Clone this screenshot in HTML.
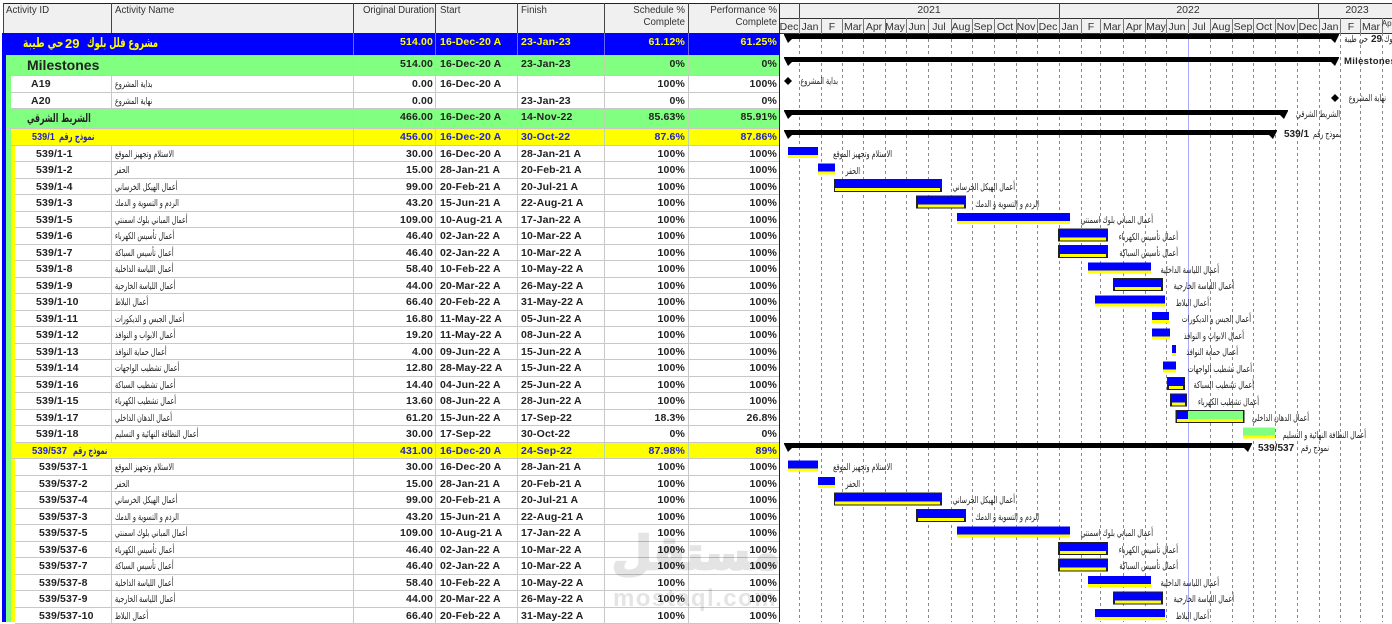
<!DOCTYPE html>
<html lang="ar"><head><meta charset="utf-8"><title>Schedule</title>
<style>
html,body{margin:0;padding:0;background:#fff}
body{width:1392px;height:622px;overflow:hidden;position:relative;font-family:"Liberation Sans",sans-serif;color:#222}
.h{position:absolute;top:3px;left:3px;width:776px;height:30px;background:#f0f0f0;border-top:1px solid #222;box-sizing:border-box}
.t{position:absolute;font-size:9.7px;line-height:12px;color:#333;white-space:nowrap;top:3px}
.v{position:absolute;top:3px;height:30px;width:1px;background:#444}
.r{position:absolute;left:15px;width:764px;height:16.5px;background:#fff;border-bottom:1px solid #c8c8c8;box-sizing:border-box;font-size:10.5px;line-height:15px;font-weight:bold;letter-spacing:.15px}
.r span{position:absolute;top:1px;white-space:nowrap}
.r i{position:absolute;top:0;bottom:0;width:1px;background:#c8c8c8}
.x1{left:96px}.x2{left:338px}.x3{left:420px}.x4{left:502px}.x5{left:589px}.x6{left:673px}
.r .n{left:100px;font:normal 9.5px/15px "DejaVu Sans",sans-serif;letter-spacing:0;direction:rtl;color:#222;transform:scaleX(.67);transform-origin:0 50%}
.r .ar{font-family:"DejaVu Sans",sans-serif;letter-spacing:0;direction:rtl;transform-origin:0 50%}
.d{right:346px}.s{left:425px}.f{left:506px}.p{right:94px}.q{right:2px}
.g{background:#80ff80}.y{background:#ff0;color:#2222cc}.b{background:#0000ff;color:#ff0;border-bottom:0}
.g i,.y i{background:#b8d8a8}.b i{background:#6666ff}
.bd{position:absolute;top:33px;bottom:0}
svg{position:absolute;left:0;top:0}
.m{font:10.5px "Liberation Sans",sans-serif;fill:#333;text-anchor:middle}
.l{font:9.5px "DejaVu Sans",sans-serif;fill:#222;direction:rtl;text-anchor:start;transform-box:fill-box;transform-origin:100% 50%;transform:scaleX(.67)}
.lb{font:bold 10px "Liberation Sans",sans-serif;fill:#222}
.wm{position:absolute;color:#e4e4e4;white-space:nowrap;mix-blend-mode:multiply}
</style></head><body>
<div class="h"></div>
<div class="t" style="left:6px;top:5px">Activity ID</div>
<div class="t" style="left:115px;top:5px">Activity Name</div>
<div class="t" style="left:363px;top:5px;letter-spacing:-.1px">Original Duration</div>
<div class="t" style="left:440px;top:5px">Start</div>
<div class="t" style="left:521px;top:5px">Finish</div>
<div class="t" style="right:707px;top:5px;text-align:right">Schedule %</div>
<div class="t" style="right:707px;top:17px;text-align:right">Complete</div>
<div class="t" style="right:615px;top:5px;text-align:right">Performance %</div>
<div class="t" style="right:615px;top:17px;text-align:right">Complete</div>
<div class="v" style="left:3px"></div><div class="v" style="left:111px"></div><div class="v" style="left:353px"></div><div class="v" style="left:435px"></div><div class="v" style="left:517px"></div><div class="v" style="left:604px"></div><div class="v" style="left:688px"></div>

<div class="bd" style="left:2px;width:4px;background:#0000ff"></div>
<div class="bd" style="left:6px;width:5px;background:#80ff80;top:55px"></div>
<div class="bd" style="left:11px;width:4px;background:#ff0;top:129px"></div>

<div class="r b" style="left:2px;width:777px;top:33px;height:22px;line-height:16px"><i style="left:109px;background:#0000ff"></i><i style="left:351px"></i><i style="left:433px"></i><i style="left:515px"></i><i style="left:602px"></i><i style="left:686px"></i>
<span class="ar" style="left:85px;top:2px;font-size:13px;line-height:18px;transform:scaleX(.64)">مشروع فلل بلوك</span>
<span style="left:63px;top:2px;font-size:13px;line-height:18px;letter-spacing:0">29</span>
<span class="ar" style="left:21px;top:2px;font-size:13px;line-height:18px;transform:scaleX(.7)">حي طيبة</span>
<span style="right:346px">514.00</span><span style="left:438px">16-Dec-20 A</span><span style="left:519px">23-Jan-23</span><span style="right:94px">61.12%</span><span style="right:2px">61.25%</span></div>

<div class="r g" style="left:6px;width:773px;top:55px;height:21px;line-height:16px"><i style="left:347px"></i><i style="left:429px"></i><i style="left:511px"></i><i style="left:598px"></i><i style="left:682px"></i>
<span style="left:21px;font-size:14px;letter-spacing:0;line-height:18px">Milestones</span>
<span style="right:346px">514.00</span><span style="left:434px">16-Dec-20 A</span><span style="left:515px">23-Jan-23</span><span style="right:94px">0%</span><span style="right:2px">0%</span></div>

<div class="r" style="left:11px;width:768px;top:76px;line-height:14px"><i style="left:100px"></i><i style="left:342px"></i><i style="left:424px"></i><i style="left:506px"></i><i style="left:593px"></i><i style="left:677px"></i>
<span style="left:20px">A19</span><span class="n" style="left:104px">بداية المشروع</span><span style="right:346px">0.00</span><span style="left:429px">16-Dec-20 A</span><span style="right:94px">100%</span><span style="right:2px">100%</span></div>
<div class="r" style="left:11px;width:768px;top:92.5px;line-height:14px"><i style="left:100px"></i><i style="left:342px"></i><i style="left:424px"></i><i style="left:506px"></i><i style="left:593px"></i><i style="left:677px"></i>
<span style="left:20px">A20</span><span class="n" style="left:104px">نهاية المشروع</span><span style="right:346px">0.00</span><span style="left:510px">23-Jan-23</span><span style="right:94px">0%</span><span style="right:2px">0%</span></div>

<div class="r g" style="left:6px;width:773px;top:109px;height:20px;line-height:14px"><i style="left:347px"></i><i style="left:429px"></i><i style="left:511px"></i><i style="left:598px"></i><i style="left:682px"></i>
<span class="ar" style="left:21px;font-size:12px;line-height:16px;transform:scaleX(.65)">الشريط الشرقي</span>
<span style="right:346px">466.00</span><span style="left:434px">16-Dec-20 A</span><span style="left:515px">14-Nov-22</span><span style="right:94px">85.63%</span><span style="right:2px">85.91%</span></div>

<div class="r y" style="left:11px;width:768px;top:129px"><i style="left:342px"></i><i style="left:424px"></i><i style="left:506px"></i><i style="left:593px"></i><i style="left:677px"></i>
<span style="left:21px;transform:scaleX(.85);transform-origin:0 50%">539/1</span>
<span class="ar" style="left:48px;font-size:10.5px;transform:scaleX(.64)">نموذج رقم</span>
<span style="right:346px">456.00</span><span style="left:429px">16-Dec-20 A</span><span style="left:510px">30-Oct-22</span><span style="right:94px">87.6%</span><span style="right:2px">87.86%</span></div>

<div class="r" style="top:145.5px"><i class="x1"></i><i class="x2"></i><i class="x3"></i><i class="x4"></i><i class="x5"></i><i class="x6"></i><span style="left:21px">539/1-1</span><span class="n">الاستلام وتجهيز الموقع</span><span class="d">30.00</span><span class="s">16-Dec-20 A</span><span class="f">28-Jan-21 A</span><span class="p">100%</span><span class="q">100%</span></div>
<div class="r" style="top:162px"><i class="x1"></i><i class="x2"></i><i class="x3"></i><i class="x4"></i><i class="x5"></i><i class="x6"></i><span style="left:21px">539/1-2</span><span class="n">الحفر</span><span class="d">15.00</span><span class="s">28-Jan-21 A</span><span class="f">20-Feb-21 A</span><span class="p">100%</span><span class="q">100%</span></div>
<div class="r" style="top:178.5px"><i class="x1"></i><i class="x2"></i><i class="x3"></i><i class="x4"></i><i class="x5"></i><i class="x6"></i><span style="left:21px">539/1-4</span><span class="n">أعمال الهيكل الخرساني</span><span class="d">99.00</span><span class="s">20-Feb-21 A</span><span class="f">20-Jul-21 A</span><span class="p">100%</span><span class="q">100%</span></div>
<div class="r" style="top:195px"><i class="x1"></i><i class="x2"></i><i class="x3"></i><i class="x4"></i><i class="x5"></i><i class="x6"></i><span style="left:21px">539/1-3</span><span class="n">الردم و التسوية و الدمك</span><span class="d">43.20</span><span class="s">15-Jun-21 A</span><span class="f">22-Aug-21 A</span><span class="p">100%</span><span class="q">100%</span></div>
<div class="r" style="top:211.5px"><i class="x1"></i><i class="x2"></i><i class="x3"></i><i class="x4"></i><i class="x5"></i><i class="x6"></i><span style="left:21px">539/1-5</span><span class="n">أعمال المباني بلوك اسمنتي</span><span class="d">109.00</span><span class="s">10-Aug-21 A</span><span class="f">17-Jan-22 A</span><span class="p">100%</span><span class="q">100%</span></div>
<div class="r" style="top:228px"><i class="x1"></i><i class="x2"></i><i class="x3"></i><i class="x4"></i><i class="x5"></i><i class="x6"></i><span style="left:21px">539/1-6</span><span class="n">أعمال تأسيس الكهرباء</span><span class="d">46.40</span><span class="s">02-Jan-22 A</span><span class="f">10-Mar-22 A</span><span class="p">100%</span><span class="q">100%</span></div>
<div class="r" style="top:244.5px"><i class="x1"></i><i class="x2"></i><i class="x3"></i><i class="x4"></i><i class="x5"></i><i class="x6"></i><span style="left:21px">539/1-7</span><span class="n">أعمال تأسيس السباكة</span><span class="d">46.40</span><span class="s">02-Jan-22 A</span><span class="f">10-Mar-22 A</span><span class="p">100%</span><span class="q">100%</span></div>
<div class="r" style="top:261px"><i class="x1"></i><i class="x2"></i><i class="x3"></i><i class="x4"></i><i class="x5"></i><i class="x6"></i><span style="left:21px">539/1-8</span><span class="n">أعمال اللياسة الداخلية</span><span class="d">58.40</span><span class="s">10-Feb-22 A</span><span class="f">10-May-22 A</span><span class="p">100%</span><span class="q">100%</span></div>
<div class="r" style="top:277.5px"><i class="x1"></i><i class="x2"></i><i class="x3"></i><i class="x4"></i><i class="x5"></i><i class="x6"></i><span style="left:21px">539/1-9</span><span class="n">أعمال اللياسة الخارجية</span><span class="d">44.00</span><span class="s">20-Mar-22 A</span><span class="f">26-May-22 A</span><span class="p">100%</span><span class="q">100%</span></div>
<div class="r" style="top:294px"><i class="x1"></i><i class="x2"></i><i class="x3"></i><i class="x4"></i><i class="x5"></i><i class="x6"></i><span style="left:21px">539/1-10</span><span class="n">أعمال البلاط</span><span class="d">66.40</span><span class="s">20-Feb-22 A</span><span class="f">31-May-22 A</span><span class="p">100%</span><span class="q">100%</span></div>
<div class="r" style="top:310.5px"><i class="x1"></i><i class="x2"></i><i class="x3"></i><i class="x4"></i><i class="x5"></i><i class="x6"></i><span style="left:21px">539/1-11</span><span class="n">أعمال الجبس و الديكورات</span><span class="d">16.80</span><span class="s">11-May-22 A</span><span class="f">05-Jun-22 A</span><span class="p">100%</span><span class="q">100%</span></div>
<div class="r" style="top:327px"><i class="x1"></i><i class="x2"></i><i class="x3"></i><i class="x4"></i><i class="x5"></i><i class="x6"></i><span style="left:21px">539/1-12</span><span class="n">أعمال الابواب و النوافذ</span><span class="d">19.20</span><span class="s">11-May-22 A</span><span class="f">08-Jun-22 A</span><span class="p">100%</span><span class="q">100%</span></div>
<div class="r" style="top:343.5px"><i class="x1"></i><i class="x2"></i><i class="x3"></i><i class="x4"></i><i class="x5"></i><i class="x6"></i><span style="left:21px">539/1-13</span><span class="n">أعمال حماية النوافذ</span><span class="d">4.00</span><span class="s">09-Jun-22 A</span><span class="f">15-Jun-22 A</span><span class="p">100%</span><span class="q">100%</span></div>
<div class="r" style="top:360px"><i class="x1"></i><i class="x2"></i><i class="x3"></i><i class="x4"></i><i class="x5"></i><i class="x6"></i><span style="left:21px">539/1-14</span><span class="n">أعمال تشطيب الواجهات</span><span class="d">12.80</span><span class="s">28-May-22 A</span><span class="f">15-Jun-22 A</span><span class="p">100%</span><span class="q">100%</span></div>
<div class="r" style="top:376.5px"><i class="x1"></i><i class="x2"></i><i class="x3"></i><i class="x4"></i><i class="x5"></i><i class="x6"></i><span style="left:21px">539/1-16</span><span class="n">أعمال تشطيب السباكة</span><span class="d">14.40</span><span class="s">04-Jun-22 A</span><span class="f">25-Jun-22 A</span><span class="p">100%</span><span class="q">100%</span></div>
<div class="r" style="top:393px"><i class="x1"></i><i class="x2"></i><i class="x3"></i><i class="x4"></i><i class="x5"></i><i class="x6"></i><span style="left:21px">539/1-15</span><span class="n">أعمال تشطيب الكهرباء</span><span class="d">13.60</span><span class="s">08-Jun-22 A</span><span class="f">28-Jun-22 A</span><span class="p">100%</span><span class="q">100%</span></div>
<div class="r" style="top:409.5px"><i class="x1"></i><i class="x2"></i><i class="x3"></i><i class="x4"></i><i class="x5"></i><i class="x6"></i><span style="left:21px">539/1-17</span><span class="n">أعمال الدهان الداخلي</span><span class="d">61.20</span><span class="s">15-Jun-22 A</span><span class="f">17-Sep-22</span><span class="p">18.3%</span><span class="q">26.8%</span></div>
<div class="r" style="top:426px"><i class="x1"></i><i class="x2"></i><i class="x3"></i><i class="x4"></i><i class="x5"></i><i class="x6"></i><span style="left:21px">539/1-18</span><span class="n">أعمال النظافة النهائية و التسليم</span><span class="d">30.00</span><span class="s">17-Sep-22</span><span class="f">30-Oct-22</span><span class="p">0%</span><span class="q">0%</span></div>

<div class="r y" style="left:11px;width:768px;top:442.5px"><i style="left:342px"></i><i style="left:424px"></i><i style="left:506px"></i><i style="left:593px"></i><i style="left:677px"></i>
<span style="left:21px;transform:scaleX(.9);transform-origin:0 50%">539/537</span>
<span class="ar" style="left:62px;font-size:10.5px;transform:scaleX(.62)">نموذج رقم</span>
<span style="right:346px">431.00</span><span style="left:429px">16-Dec-20 A</span><span style="left:510px">24-Sep-22</span><span style="right:94px">87.98%</span><span style="right:2px">89%</span></div>

<div class="r" style="top:459px"><i class="x1"></i><i class="x2"></i><i class="x3"></i><i class="x4"></i><i class="x5"></i><i class="x6"></i><span style="left:24px">539/537-1</span><span class="n">الاستلام وتجهيز الموقع</span><span class="d">30.00</span><span class="s">16-Dec-20 A</span><span class="f">28-Jan-21 A</span><span class="p">100%</span><span class="q">100%</span></div>
<div class="r" style="top:475.5px"><i class="x1"></i><i class="x2"></i><i class="x3"></i><i class="x4"></i><i class="x5"></i><i class="x6"></i><span style="left:24px">539/537-2</span><span class="n">الحفر</span><span class="d">15.00</span><span class="s">28-Jan-21 A</span><span class="f">20-Feb-21 A</span><span class="p">100%</span><span class="q">100%</span></div>
<div class="r" style="top:492px"><i class="x1"></i><i class="x2"></i><i class="x3"></i><i class="x4"></i><i class="x5"></i><i class="x6"></i><span style="left:24px">539/537-4</span><span class="n">أعمال الهيكل الخرساني</span><span class="d">99.00</span><span class="s">20-Feb-21 A</span><span class="f">20-Jul-21 A</span><span class="p">100%</span><span class="q">100%</span></div>
<div class="r" style="top:508.5px"><i class="x1"></i><i class="x2"></i><i class="x3"></i><i class="x4"></i><i class="x5"></i><i class="x6"></i><span style="left:24px">539/537-3</span><span class="n">الردم و التسوية و الدمك</span><span class="d">43.20</span><span class="s">15-Jun-21 A</span><span class="f">22-Aug-21 A</span><span class="p">100%</span><span class="q">100%</span></div>
<div class="r" style="top:525px"><i class="x1"></i><i class="x2"></i><i class="x3"></i><i class="x4"></i><i class="x5"></i><i class="x6"></i><span style="left:24px">539/537-5</span><span class="n">أعمال المباني بلوك اسمنتي</span><span class="d">109.00</span><span class="s">10-Aug-21 A</span><span class="f">17-Jan-22 A</span><span class="p">100%</span><span class="q">100%</span></div>
<div class="r" style="top:541.5px"><i class="x1"></i><i class="x2"></i><i class="x3"></i><i class="x4"></i><i class="x5"></i><i class="x6"></i><span style="left:24px">539/537-6</span><span class="n">أعمال تأسيس الكهرباء</span><span class="d">46.40</span><span class="s">02-Jan-22 A</span><span class="f">10-Mar-22 A</span><span class="p">100%</span><span class="q">100%</span></div>
<div class="r" style="top:558px"><i class="x1"></i><i class="x2"></i><i class="x3"></i><i class="x4"></i><i class="x5"></i><i class="x6"></i><span style="left:24px">539/537-7</span><span class="n">أعمال تأسيس السباكة</span><span class="d">46.40</span><span class="s">02-Jan-22 A</span><span class="f">10-Mar-22 A</span><span class="p">100%</span><span class="q">100%</span></div>
<div class="r" style="top:574.5px"><i class="x1"></i><i class="x2"></i><i class="x3"></i><i class="x4"></i><i class="x5"></i><i class="x6"></i><span style="left:24px">539/537-8</span><span class="n">أعمال اللياسة الداخلية</span><span class="d">58.40</span><span class="s">10-Feb-22 A</span><span class="f">10-May-22 A</span><span class="p">100%</span><span class="q">100%</span></div>
<div class="r" style="top:591px"><i class="x1"></i><i class="x2"></i><i class="x3"></i><i class="x4"></i><i class="x5"></i><i class="x6"></i><span style="left:24px">539/537-9</span><span class="n">أعمال اللياسة الخارجية</span><span class="d">44.00</span><span class="s">20-Mar-22 A</span><span class="f">26-May-22 A</span><span class="p">100%</span><span class="q">100%</span></div>
<div class="r" style="top:607.5px"><i class="x1"></i><i class="x2"></i><i class="x3"></i><i class="x4"></i><i class="x5"></i><i class="x6"></i><span style="left:24px">539/537-10</span><span class="n">أعمال البلاط</span><span class="d">66.40</span><span class="s">20-Feb-22 A</span><span class="f">31-May-22 A</span><span class="p">100%</span><span class="q">100%</span></div>

<svg width="1392" height="622" viewBox="0 0 1392 622">
<rect x="779" y="3" width="613" height="30" fill="#f0f0f0"/>
<path d="M779 3.5H1392M779 18.5H1392M779 33.5H1392" stroke="#333" fill="none"/>
<path d="M799.5 3V18M1059.5 3V18M1318.5 3V18" stroke="#444" fill="none"/>
<path d="M799.5 18V33M821.5 18V33M842.5 18V33M863.5 18V33M885.5 18V33M906.5 18V33M928.5 18V33M951.5 18V33M972.5 18V33M994.5 18V33M1016.5 18V33M1037.5 18V33M1059.5 18V33M1081.5 18V33M1100.5 18V33M1123.5 18V33M1145.5 18V33M1166.5 18V33M1188.5 18V33M1210.5 18V33M1232.5 18V33M1253.5 18V33M1275.5 18V33M1297.5 18V33M1319.5 18V33M1340.5 18V33M1360.5 18V33M1382.5 18V33" stroke="#777" fill="none"/>
<path d="M799.5 33V622M821.5 33V622M842.5 33V622M863.5 33V622M885.5 33V622M906.5 33V622M928.5 33V622M951.5 33V622M972.5 33V622M994.5 33V622M1016.5 33V622M1037.5 33V622M1059.5 33V622M1081.5 33V622M1100.5 33V622M1123.5 33V622M1145.5 33V622M1166.5 33V622M1210.5 33V622M1232.5 33V622M1253.5 33V622M1275.5 33V622M1297.5 33V622M1319.5 33V622M1340.5 33V622M1360.5 33V622M1382.5 33V622" stroke="#888" stroke-dasharray="3 3" fill="none"/>
<path d="M1188.5 33V622" stroke="#a8a8ff" fill="none"/>
<path d="M779.5 3V622" stroke="#222" fill="none"/>
<text class="m" x="929" y="13">2021</text><text class="m" x="1188" y="13">2022</text><text class="m" x="1357" y="13">2023</text>
<text class="m" x="789" y="30">Dec</text><text class="m" x="810" y="30">Jan</text><text class="m" x="832" y="30">F</text><text class="m" x="853" y="30">Mar</text><text class="m" x="874" y="30">Apr</text><text class="m" x="895" y="30">May</text><text class="m" x="917" y="30">Jun</text><text class="m" x="939" y="30">Jul</text><text class="m" x="961" y="30">Aug</text><text class="m" x="983" y="30">Sep</text><text class="m" x="1005" y="30">Oct</text><text class="m" x="1026" y="30">Nov</text><text class="m" x="1048" y="30">Dec</text><text class="m" x="1070" y="30">Jan</text><text class="m" x="1091" y="30">F</text><text class="m" x="1112" y="30">Mar</text><text class="m" x="1134" y="30">Apr</text><text class="m" x="1156" y="30">May</text><text class="m" x="1177" y="30">Jun</text><text class="m" x="1199" y="30">Jul</text><text class="m" x="1221" y="30">Aug</text><text class="m" x="1243" y="30">Sep</text><text class="m" x="1264" y="30">Oct</text><text class="m" x="1286" y="30">Nov</text><text class="m" x="1308" y="30">Dec</text><text class="m" x="1330" y="30">Jan</text><text class="m" x="1351" y="30">F</text><text class="m" x="1371" y="30">Mar</text><text class="m" x="1388" y="26" style="font-size:8px">Apr</text>

<path fill="#000" d="M784 34H1339v1l-4 8-4-4H792l-4 4-4-8zM784 57H1339v1l-4 8-4-4H792l-4 4-4-8zM784 110H1288v1l-4 8-4-4H792l-4 4-4-8zM784 130H1277v1l-4 8-4-4H792l-4 4-4-8zM784 443H1252v1l-4 8-4-4H792l-4 4-4-8z"/>
<path fill="#000" d="M788 77l4 4-4 4-4-4zM1335 94l4 4-4 4-4-4z"/>

<g id="b1">
<path fill="#222" d="M834 179h108v13H834zM916 195.500h50v13H916zM1058 228.500h50v13h-50zM1058 245h50v13h-50zM1113 278h50v13h-50z"/>
<path fill="#0000ff" d="M788 147h30v8h-30zM818 163.500h17v8h-17zM835 180h106v8H835zM917 196.500h48v8h-48zM957 213h113v8H957zM1059 229.500h48v8h-48zM1059 246h48v8h-48zM1088 262.500h63v8h-63zM1114 279h48v8h-48zM1095 295.500h70v8h-70z"/>
<path fill="#ff0" d="M788 155h30v3h-30zM818 171.500h17v3h-17zM835 188h105v3H835zM918 204.500h46v3h-46zM957 221h113v3H957zM1060 237.500h46v3h-46zM1060 254h46v3h-46zM1088 270.500h63v3h-63zM1115 287h46v3h-46zM1095 303.500h70v3h-70z"/>
</g>
<use href="#b1" y="313.500"/>
<path fill="#222" d="M1167 377h18v13h-18zM1170 393.500h17v13h-17zM1175.500 410h69v13h-69z"/>
<path fill="#0000ff" d="M1152 312h17v8h-17zM1152 328.500h18v8h-18zM1172 345h4v8h-4zM1163 361.500h13v8h-13zM1168 378h16v8h-16zM1171 394.500h15v8h-15zM1177 411h11v8h-11z"/>
<path fill="#ff0" d="M1152 320h17v3h-17zM1152 336.500h18v3h-18zM1172 353h4v3h-4zM1163 369.500h13v3h-13zM1169 386h14v3h-14zM1172 402.500h13v3h-13zM1177 419h66v3h-66zM1243 435.500h32v3h-32z"/>
<path fill="#80ff80" d="M1188 411h55v8h-55zM1243 427.500h32v8h-32z"/>

<text class="l" x="1368" y="42">حي طيبة</text>
<text class="lb" x="1371" y="42">29</text>
<text class="l" x="1430" y="42">مشروع فلل بلوك</text>
<text x="1344" y="64" style="font:bold 9.500px 'Liberation Sans',sans-serif;fill:#222;letter-spacing:.3px">Milestones</text>
<text class="l" x="838" y="84">بداية المشروع</text>
<text class="l" x="1386" y="101">نهاية المشروع</text>
<text class="l" x="1340" y="117">الشريط الشرقي</text>
<text class="lb" x="1284" y="137">539/1</text>
<text class="l" x="1341" y="137">نموذج رقم</text>
<text class="l" x="892" y="157">الاستلام وتجهيز الموقع</text>
<text class="l" x="860" y="174">الحفر</text>
<text class="l" x="1015" y="190">أعمال الهيكل الخرساني</text>
<text class="l" x="1039" y="207">الردم و التسوية و الدمك</text>
<text class="l" x="1153" y="223">أعمال المباني بلوك اسمنتي</text>
<text class="l" x="1178" y="240">أعمال تأسيس الكهرباء</text>
<text class="l" x="1178" y="256">أعمال تأسيس السباكة</text>
<text class="l" x="1219" y="273">أعمال اللياسة الداخلية</text>
<text class="l" x="1234" y="289">أعمال اللياسة الخارجية</text>
<text class="l" x="1209" y="306">أعمال البلاط</text>
<text class="l" x="1251" y="322">أعمال الجبس و الديكورات</text>
<text class="l" x="1244" y="339">أعمال الابواب و النوافذ</text>
<text class="l" x="1238" y="355">أعمال حماية النوافذ</text>
<text class="l" x="1252" y="372">أعمال تشطيب الواجهات</text>
<text class="l" x="1254" y="388">أعمال تشطيب السباكة</text>
<text class="l" x="1259" y="405">أعمال تشطيب الكهرباء</text>
<text class="l" x="1309" y="421">أعمال الدهان الداخلي</text>
<text class="l" x="1366" y="438">أعمال النظافة النهائية و التسليم</text>
<text class="lb" x="1258" y="451">539/537</text>
<text class="l" x="1329" y="451">نموذج رقم</text>
<text class="l" x="892" y="470">الاستلام وتجهيز الموقع</text>
<text class="l" x="860" y="487">الحفر</text>
<text class="l" x="1015" y="503">أعمال الهيكل الخرساني</text>
<text class="l" x="1039" y="520">الردم و التسوية و الدمك</text>
<text class="l" x="1153" y="536">أعمال المباني بلوك اسمنتي</text>
<text class="l" x="1178" y="553">أعمال تأسيس الكهرباء</text>
<text class="l" x="1178" y="569">أعمال تأسيس السباكة</text>
<text class="l" x="1219" y="586">أعمال اللياسة الداخلية</text>
<text class="l" x="1234" y="602">أعمال اللياسة الخارجية</text>
<text class="l" x="1209" y="619">أعمال البلاط</text>
</svg>

<div class="wm" dir="rtl" style="left:611px;top:518px;width:170px;text-align:center;font:bold 46px/70px 'DejaVu Sans',sans-serif;-webkit-text-stroke:2.500px #e4e4e4">مستقل</div>
<div class="wm" style="left:613px;top:585px;font:bold 24px/28px 'Liberation Sans',sans-serif;letter-spacing:1.450px">mostaql.com</div>
</body></html>
